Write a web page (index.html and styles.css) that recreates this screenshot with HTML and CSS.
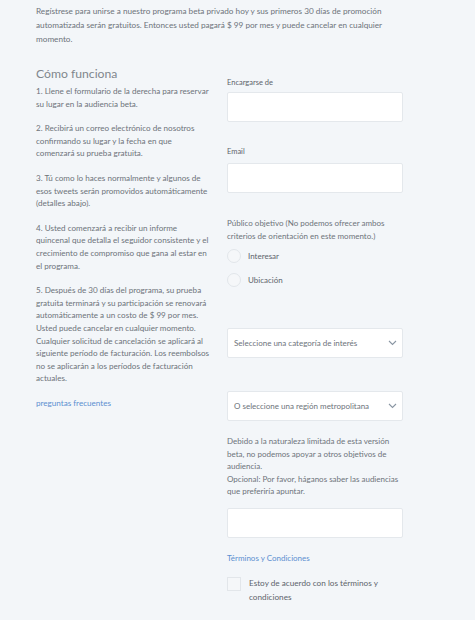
FILE: index.html
```html
<!DOCTYPE html>
<html lang="es">
<head>
<meta charset="utf-8">
<link rel="stylesheet" href="styles.css">
</head>
<body>
<div class="page">
  <p class="intro">Regístrese para unirse a nuestro programa beta privado hoy y sus primeros 30 días de promoción automatizada serán gratuitos. Entonces usted pagará $ 99 por mes y puede cancelar en cualquier momento.</p>
  <div class="cols">
    <div class="left">
      <h2 class="title">Cómo funciona</h2>
      <p class="step">1. Llene el formulario de la derecha para reservar su lugar en la audiencia beta.</p>
      <p class="step">2. Recibirá un correo electrónico de nosotros confirmando su lugar y la fecha en que comenzará su prueba gratuita.</p>
      <p class="step">3. Tú como lo haces normalmente y algunos de esos tweets serán promovidos automáticamente (detalles abajo).</p>
      <p class="step">4. Usted comenzará a recibir un informe quincenal que detalla el seguidor consistente y el crecimiento de compromiso que gana al estar en el programa.</p>
      <p class="step">5. Después de 30 días del programa, su prueba gratuita terminará y su participación se renovará automáticamente a un costo de $ 99 por mes. Usted puede cancelar en cualquier momento. Cualquier solicitud de cancelación se aplicará al siguiente período de facturación. Los reembolsos no se aplicarán a los períodos de facturación actuales.</p>
      <a class="link faq" href="#">preguntas frecuentes</a>
    </div>
    <div class="right">
      <label class="label first">Encargarse de</label>
      <div class="input"></div>
      <label class="label email">Email</label>
      <div class="input"></div>
      <p class="audience">Público objetivo (No podemos ofrecer ambos criterios de orientación en este momento.)</p>
      <div class="radio"><span class="circle"></span><span>Interesar</span></div>
      <div class="radio"><span class="circle"></span><span>Ubicación</span></div>
      <div class="select sel1"><span>Seleccione una categoría de interés</span>
        <svg class="chev" width="9" height="6" viewBox="0 0 9 6"><path d="M1 1l3.5 3.5L8 1" fill="none" stroke="#8a96a3" stroke-width="1.1"/></svg>
      </div>
      <div class="select sel2"><span>O seleccione una región metropolitana</span>
        <svg class="chev" width="9" height="6" viewBox="0 0 9 6"><path d="M1 1l3.5 3.5L8 1" fill="none" stroke="#8a96a3" stroke-width="1.1"/></svg>
      </div>
      <p class="note">Debido a la naturaleza limitada de esta versión beta, no podemos apoyar a otros objetivos de audiencia.<br>Opcional: Por favor, háganos saber las audiencias que preferiría apuntar.</p>
      <div class="input"></div>
      <a class="link terms" href="#">Términos y Condiciones</a>
      <div class="check"><span class="box"></span><span>Estoy de acuerdo con los términos y condiciones</span></div>
    </div>
  </div>
</div>
</body>
</html>
```
FILE: styles.css
```css
html, body {
  margin: 0;
  padding: 0;
  background: #f3f6f9;
}
body {
  font-family: Lato, "Open Sans", sans-serif;
  font-size: 8px;
  color: #6d737a;
  line-height: 12.5px;
}
.page {
  padding: 4px 0 0 36px;
  width: 380px;
}
.intro {
  margin: 0;
  line-height: 14px;
  font-size: 8.2px;
  width: 362px;
}
.cols {
  display: flex;
  margin-top: 20px;
}
.left {
  width: 174px;
  margin-right: 17px;
  font-size: 8.1px;
}
.title {
  font-weight: 400;
  font-size: 12.2px;
  line-height: 16px;
  color: #80868d;
  margin: 0 0 3px;
}
.step {
  margin: 0 0 12px;
  line-height: 12.6px;
}
.link {
  color: #5b8fd0;
  text-decoration: none;
  display: block;
}
.faq {
  margin-top: 0;
}
.right {
  width: 176px;
  display: flex;
  flex-direction: column;
}
.label {
  display: block;
  font-size: 7.5px;
  color: #5d646b;
  line-height: 10px;
}
.label.first {
  margin-top: 12px;
  margin-bottom: 4px;
}
.label.email {
  margin-top: 25px;
  margin-bottom: 6px;
}
.input {
  height: 28px;
  background: #fff;
  border: 1px solid #e4e8ec;
  border-radius: 2px;
}
.audience {
  margin: 24px 0 2px;
}
.radio {
  display: flex;
  align-items: center;
  gap: 7px;
  height: 24px;
  color: #5d646b;
}
.circle {
  width: 12px;
  height: 12px;
  border: 1px solid #e2e6ea;
  border-radius: 50%;
  background: #f5f7f9;
}
.select {
  height: 28px;
  background: #fff;
  border: 1px solid #e4e8ec;
  border-radius: 2px;
  display: flex;
  align-items: center;
  justify-content: space-between;
  padding: 0 5px 0 6px;
}
.sel1 {
  margin-top: 36px;
}
.sel2 {
  margin-top: 33px;
}
.note {
  margin: 14px 0 10px;
}
.terms {
  margin-top: 14px;
}
.check {
  display: flex;
  gap: 8px;
  margin-top: 13px;
  color: #5d646b;
  line-height: 13.5px;
  font-size: 8.2px;
}
.box {
  flex: none;
  width: 12px;
  height: 12px;
  border: 1px solid #e2e6ea;
  background: #f5f7f9;
}
.check span:last-child {
  width: 145px;
}
```
